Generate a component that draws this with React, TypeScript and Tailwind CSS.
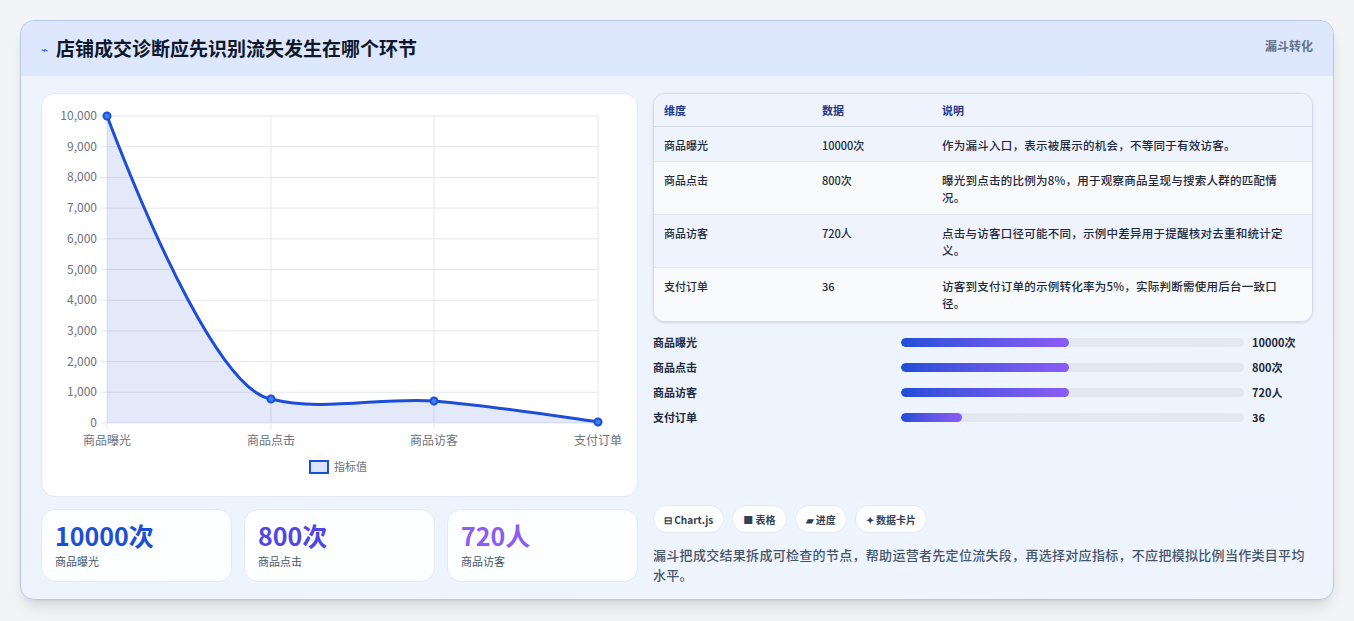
export default function App() {
  const ff = { fontFamily: '"Noto Sans CJK SC","Noto Sans",sans-serif' };
  const yl = ["10,000","9,000","8,000","7,000","6,000","5,000","4,000","3,000","2,000","1,000","0"];
  const X0 = 65, X1 = 556, Y0 = 22, Y1 = 329;
  const xs = [65, 229, 392, 556];
  const rows = [
    ["商品曝光", "10000次", "作为漏斗入口，表示被展示的机会，不等同于有效访客。"],
    ["商品点击", "800次", "曝光到点击的比例为8%，用于观察商品呈现与搜索人群的匹配情况。"],
    ["商品访客", "720人", "点击与访客口径可能不同，示例中差异用于提醒核对去重和统计定义。"],
    ["支付订单", "36", "访客到支付订单的示例转化率为5%，实际判断需使用后台一致口径。"],
  ];
  const bars = [["商品曝光","10000次",168],["商品点击","800次",168],["商品访客","720人",168],["支付订单","36",61]] as const;
  const curve = "M65,22 C110,140 180,297 229,305 C280,318 340,303 392,307 C450,312 500,320 556,328";
  return (
    <div className="w-[1354px] h-[621px] bg-[#f3f4f6] pt-5 px-5" style={ff}>
      <div className="w-[1314px] h-[580px] rounded-[14px] border border-[#b9c7ee] overflow-hidden bg-gradient-to-br from-[#eef3fe] to-[#eef5ff] shadow-lg flex flex-col">
        <div className="h-[55px] bg-[#dde7fd] flex items-center justify-between px-5 shrink-0">
          <div className="flex items-center gap-2">
            <span className="text-[#2563eb] text-[12px]">⌁</span>
            <span className="text-[19px] font-bold text-[#0f172a]">店铺成交诊断应先识别流失发生在哪个环节</span>
          </div>
          <span className="text-[12px] font-bold text-[#64748b] self-start mt-4">漏斗转化</span>
        </div>
        <div className="flex gap-[15px] px-5 pt-[17px]">
          <div className="w-[597px] flex flex-col gap-3">
            <div className="h-[404px] bg-white rounded-[14px] border border-[#e5e9f5]">
              <svg width="597" height="404">
                {yl.map((l, i) => {
                  const y = Y0 + (i * (Y1 - Y0)) / 10;
                  return (
                    <g key={l}>
                      <line x1={X0} x2={X1} y1={y} y2={y} stroke="#e5e7eb" />
                      <line x1={X0 - 6} x2={X0} y1={y} y2={y} stroke="#e5e7eb" />
                      <text x={X0 - 10} y={y + 4} textAnchor="end" fontSize="12" fill="#6b7280">{l}</text>
                    </g>
                  );
                })}
                {xs.map((x) => <line key={x} x1={x} x2={x} y1={Y0} y2={Y1 + 6} stroke="#e5e7eb" />)}
                <path d={curve + " L556,329 L65,329 Z"} fill="#1d4ed8" fillOpacity="0.12" />
                <path d={curve} fill="none" stroke="#1d4ed8" strokeWidth="3" />
                {[[65,22],[229,305],[392,307],[556,328]].map(([x,y]) => <circle key={x} cx={x} cy={y} r="3.5" fill="#3b82f6" stroke="#1d4ed8" strokeWidth="2" />)}
                {["商品曝光","商品点击","商品访客","支付订单"].map((t, i) => (
                  <text key={t} x={xs[i]} y={351} textAnchor="middle" fontSize="12" fill="#6b7280">{t}</text>
                ))}
                <rect x="268" y="367" width="18" height="12" fill="#dbe4fb" stroke="#1d4ed8" strokeWidth="2" />
                <text x="292" y="377" fontSize="11" fill="#6b7280">指标值</text>
              </svg>
            </div>
            <div className="flex gap-3">
              {[["10000次","text-[#1d4ed8]"],["800次","text-[#4f46e5]"],["720人","text-[#8b5cf6]"]].map(([n, c], i) => (
                <div key={n} className="flex-1 h-[73px] bg-white/90 rounded-[14px] border border-[#e5e9f5] px-[13px] pt-[9px]">
                  <div className={`text-[25px] font-bold leading-[32px] ${c}`}>{n}</div>
                  <div className="text-[11px] text-[#475569] mt-[2px]">{["商品曝光","商品点击","商品访客"][i]}</div>
                </div>
              ))}
            </div>
          </div>
          <div className="w-[662px] flex flex-col">
            <div className="rounded-[12px] border border-[#d3dbec] overflow-hidden text-[11px] text-[#1e293b] font-medium shadow-sm">
              <div className="flex h-[33px] items-center bg-[#eef3fe] border-b border-[#d3dbec] text-[#1e3a8a] font-bold">
                <div className="w-[168px] pl-[10px]">维度</div><div className="w-[120px]">数据</div><div>说明</div>
              </div>
              {rows.map((r, i) => (
                <div key={r[0]} className={`flex py-[10px] ${i % 2 === 0 ? "bg-[#eef3fe]" : "bg-[#f8fafc]"} ${i < 3 ? "border-b border-[#e2e8f0]" : ""} ${i === 0 ? "h-[35px]" : "h-[53px]"}`}>
                  <div className="w-[168px] pl-[10px]">{r[0]}</div>
                  <div className="w-[120px]">{r[1]}</div>
                  <div className="w-[358px] leading-[17px] text-[11.5px] tracking-[0.25px]">{r[2]}</div>
                </div>
              ))}
            </div>
            <div className="flex flex-col gap-[9px] mt-[12px]">
              {bars.map(([l, v, w]) => (
                <div key={l} className="flex items-center h-[16px] text-[11px] font-bold text-[#1e293b]">
                  <div className="w-[248px]">{l}</div>
                  <div className="w-[343px] h-[9px] rounded-full bg-[#e2e8f0] overflow-hidden">
                    <div className="h-full rounded-full bg-gradient-to-r from-[#1d4ed8] to-[#8b5cf6]" style={{ width: w }} />
                  </div>
                  <div className="pl-[8px]">{v}</div>
                </div>
              ))}
            </div>
            <div className="flex gap-2 mt-[80px] text-[10px] font-bold text-[#334155]">
              {["⊟ Chart.js","■ 表格","▰ 进度","✦ 数据卡片"].map((t) => (
                <div key={t} className="h-[28px] px-[10px] flex items-center rounded-full bg-white border border-[#e5e9f5]">{t}</div>
              ))}
            </div>
            <div className="mt-[12px] w-[652px] text-[13px] tracking-[0.3px] leading-[20px] text-[#475569] font-medium">
              漏斗把成交结果拆成可检查的节点，帮助运营者先定位流失段，再选择对应指标，不应把模拟比例当作类目平均水平。
            </div>
          </div>
        </div>
      </div>
    </div>
  );
}
